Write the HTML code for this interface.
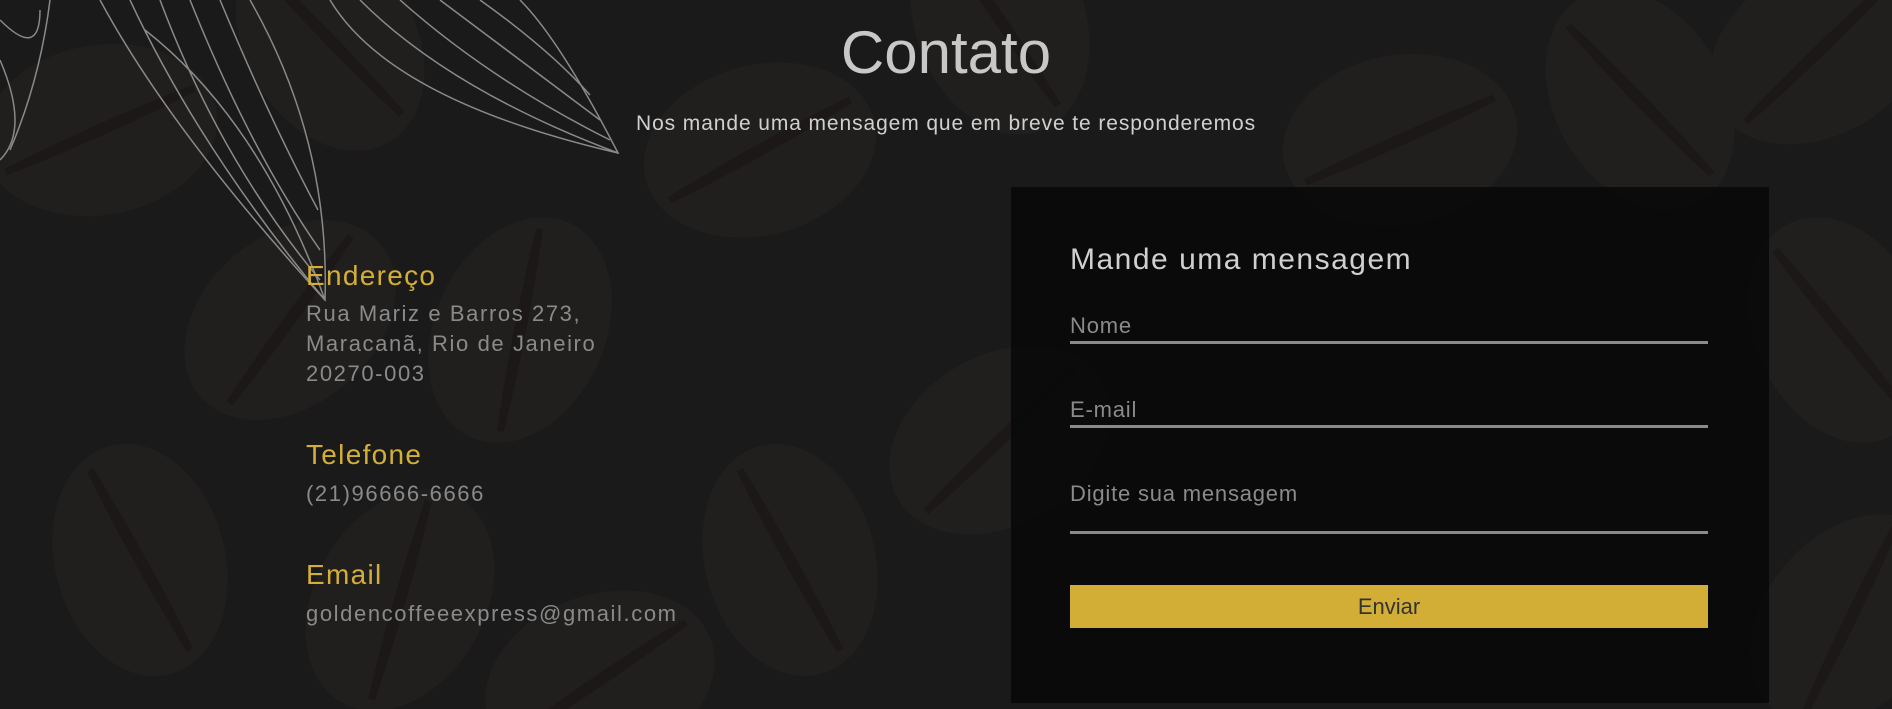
<!DOCTYPE html>
<html><head><meta charset="utf-8"><style>
html,body{margin:0;padding:0;width:1892px;height:709px;overflow:hidden}
body{background:#1b1a1a;position:relative;font-family:"Liberation Sans",sans-serif}
svg.bg{position:absolute;left:0;top:0}
.t{position:absolute;white-space:nowrap}
h1{position:absolute;margin:0;left:0;width:1892px;text-align:center;top:18px;font-weight:normal;font-size:60px;color:#c8c8c8}
.sub{left:0;width:1892px;text-align:center;top:112px;font-size:21px;letter-spacing:0.9px;color:#d0d0d0}
.lab{color:#d4af37;font-size:28px;letter-spacing:1.3px;left:306px}
.val{color:#8a8a8a;font-size:22px;letter-spacing:1.6px;left:306px;line-height:30px}
.box{position:absolute;left:1011px;top:187px;width:758px;height:516px;background:rgba(10,10,10,.93)}
.in{position:absolute;left:59px;width:638px;border-bottom:3px solid #8a8a8a;color:#8a8a8a;font-size:22px;letter-spacing:0.8px}
.btn{position:absolute;left:59px;width:638px;top:398px;height:43px;background:#d3ae37;color:#333;text-align:center;line-height:43px;font-size:22px}
</style></head><body>
<svg class="bg" width="1892" height="709">
<defs>
<g id="b"><ellipse cx="0" cy="0" rx="85" ry="118" fill="#201f1e"/><path d="M-25,-100 Q5,0 25,100 Q-5,0 -25,-100Z" fill="#1b1817" stroke="#1b1817" stroke-width="7"/></g>
</defs>
<use href="#b" transform="translate(100,130) rotate(80)"/>
<use href="#b" transform="translate(330,40) rotate(-30)"/>
<use href="#b" transform="translate(520,330) rotate(25)"/>
<use href="#b" transform="translate(760,150) rotate(75)"/>
<use href="#b" transform="translate(1000,20) rotate(-20)"/>
<use href="#b" transform="translate(1400,140) rotate(80)"/>
<use href="#b" transform="translate(1640,100) rotate(-30)"/>
<use href="#b" transform="translate(1820,50) rotate(60)"/>
<use href="#b" transform="translate(290,320) rotate(50)"/>
<use href="#b" transform="translate(140,560) rotate(-15)"/>
<use href="#b" transform="translate(400,600) rotate(30)"/>
<use href="#b" transform="translate(790,560) rotate(-15)"/>
<use href="#b" transform="translate(1000,440) rotate(60)"/>
<use href="#b" transform="translate(1840,330) rotate(-25)"/>
<use href="#b" transform="translate(1850,620) rotate(40)"/>
<use href="#b" transform="translate(600,680) rotate(70)"/>
<g fill="none" stroke="#8a8a8a" stroke-width="1.5">
<path d="M100,0 Q170,130 325,300 Q330,140 250,0"/>
<path d="M130,0 Q200,150 325,300 M160,0 Q220,160 320,280 M190,0 Q250,150 320,250 M220,0 Q270,120 318,210 M145,30 Q260,120 325,300"/>
<path d="M330,0 Q390,100 618,153 Q560,40 520,0"/>
<path d="M360,0 Q450,90 618,153 M400,0 Q490,80 610,140 M440,0 Q520,60 600,120 M480,0 Q550,50 590,95"/>
<path d="M0,60 Q30,130 0,160 M0,20 Q40,60 40,10 M50,0 Q40,80 10,150"/>
</g>
</svg>
<h1>Contato</h1>
<div class="t sub">Nos mande uma mensagem que em breve te responderemos</div>
<div class="t lab" style="top:260px">Endereço</div>
<div class="t val" style="top:299px">Rua Mariz e Barros 273,<br>Maracanã, Rio de Janeiro<br>20270-003</div>
<div class="t lab" style="top:439px">Telefone</div>
<div class="t val" style="top:479px">(21)96666-6666</div>
<div class="t lab" style="top:559px">Email</div>
<div class="t val" style="top:599px">goldencoffeeexpress@gmail.com</div>
<div class="box">
<div class="t" style="left:59px;top:56px;font-size:30px;letter-spacing:1.5px;color:#d0d0d0">Mande uma mensagem</div>
<div class="in" style="top:126px;height:28px">Nome</div>
<div class="in" style="top:210px;height:28px">E-mail</div>
<div class="in" style="top:294px;height:50px">Digite sua mensagem</div>
<div class="btn">Enviar</div>
</div>
</body></html>
